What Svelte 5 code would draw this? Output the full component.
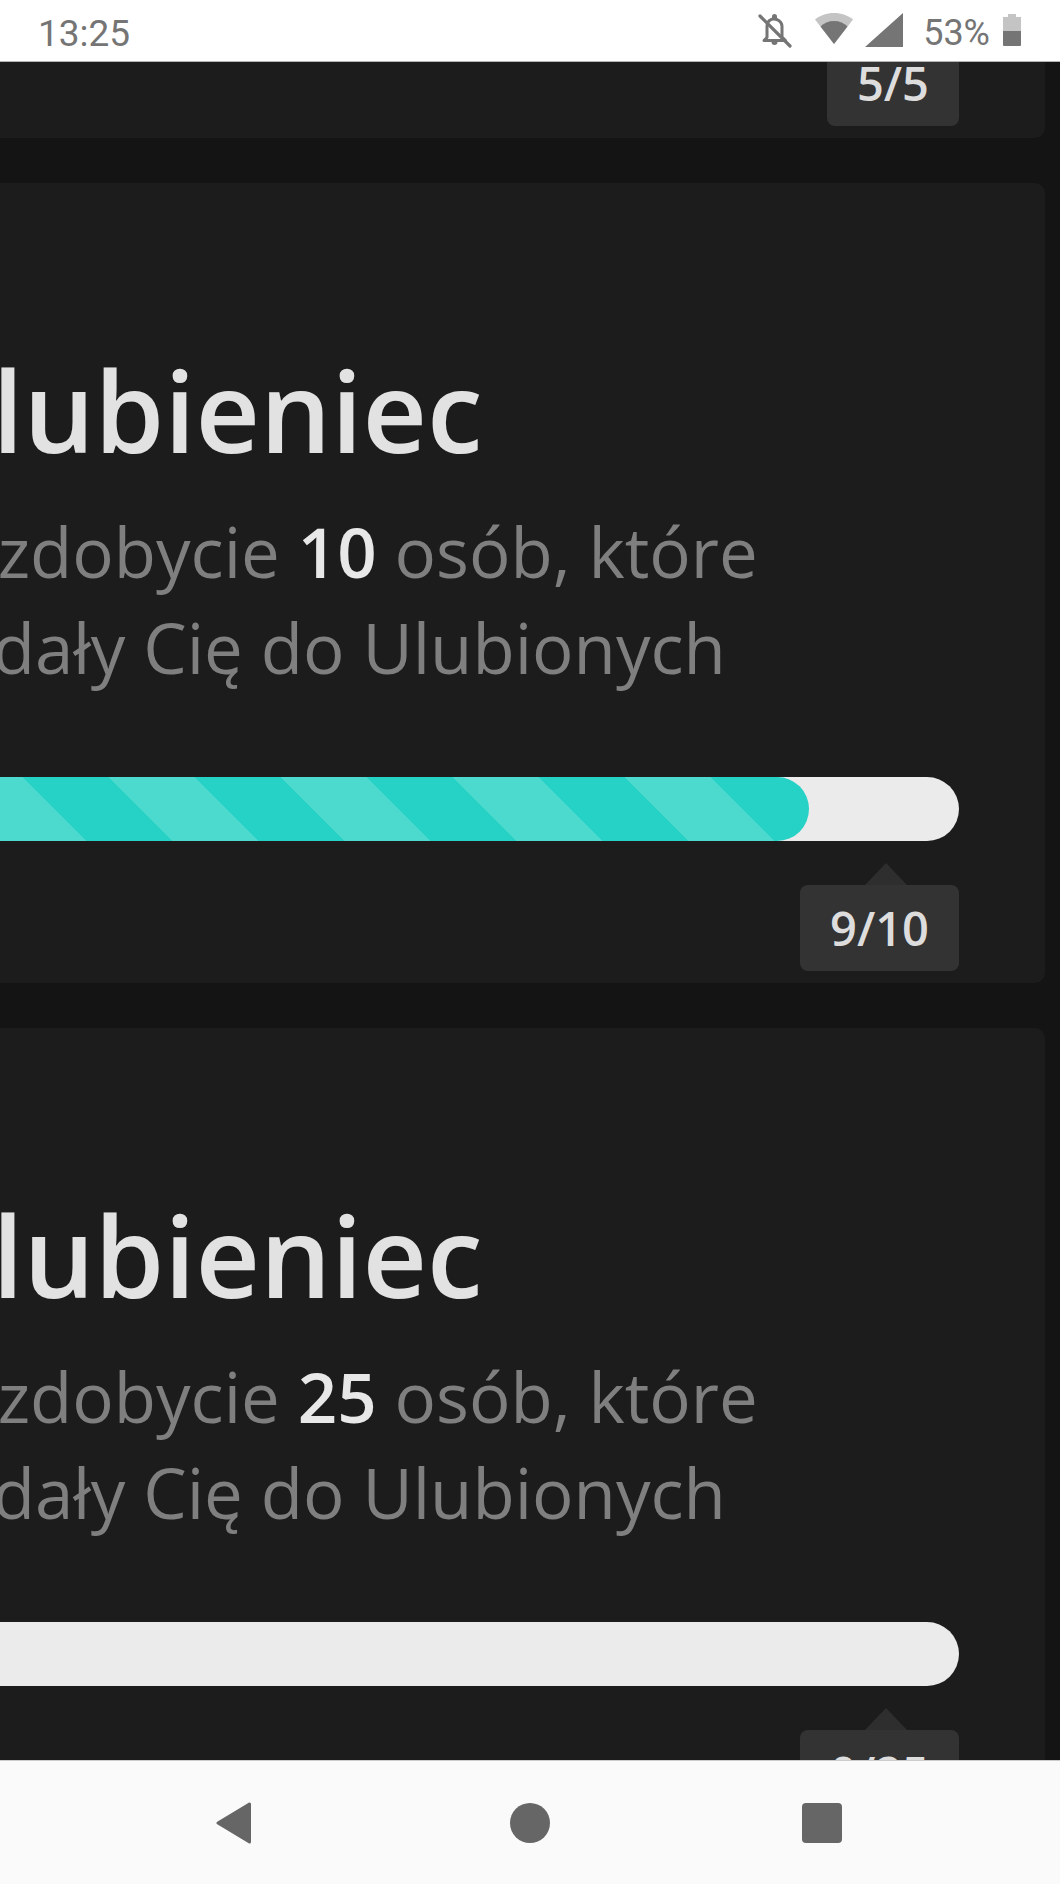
<script>
	const cards = [
		{ id: 1, title: 'Ulubieniec', goal: 5, value: 5 },
		{ id: 2, title: 'Ulubieniec', goal: 10, value: 9 },
		{ id: 3, title: 'Ulubieniec', goal: 25, value: 0 }
	];
</script>

<div class="phone">
	<header class="status-bar">
		<span class="time">13:25</span>
		<div class="status-icons">
			<svg class="bell" viewBox="0 0 34 34" width="34" height="34">
				<path fill="none" stroke="#757575" stroke-width="3" stroke-linejoin="round" d="M9 11.5C9 7.5 12.5 5 16 5s8 2.5 8 7.5v10.5l3.5 3.5H6l3-3z" />
				<path fill="#757575" d="M13.5 28h6a3 3 0 0 1-6 0zM14 2.500a2.500 2.500 0 0 1 5 0v3h-5z" />
				<path stroke="#757575" stroke-width="3.200" stroke-linecap="round" d="M2 2l30 30" />
			</svg>
			<svg class="wifi" viewBox="0 0 38 31" width="38" height="31">
				<path fill="#c4c4c4" d="M19 31L0 6.500C5 2.500 11.500 0 19 0s14 2.500 19 6.500z" />
				<path fill="#757575" d="M19 31L5.500 13.500C9 10 13.500 8 19 8s10 2 13.500 5.500z" />
			</svg>
			<svg class="signal" viewBox="0 0 38 34" width="38" height="34">
				<path fill="#757575" d="M0 34L38 0v34z" />
			</svg>
			<span class="battery-text">53%</span>
			<svg class="battery" viewBox="0 0 18 32" width="18" height="32">
				<path fill="#c4c4c4" d="M5 0h8v3h5v14H0V3h5z" />
				<path fill="#757575" d="M0 17h18v14a1 1 0 0 1-1 1H1a1 1 0 0 1-1-1z" />
			</svg>
		</div>
	</header>

	<main class="scroller">
		{#each cards as card (card.id)}
			<section class="card">
				<h2>{card.title}</h2>
				<p>Za zdobycie <strong>{card.goal}</strong> osób, które<br />dodały Cię do Ulubionych</p>
				<div class="track">
					<div class="fill" style="width: {(card.value / card.goal) * 100}%"></div>
				</div>
				<div class="count-row">
					<div class="count">{card.value}/{card.goal}</div>
				</div>
			</section>
		{/each}
	</main>

	<nav class="nav-bar">
		<svg class="back" viewBox="0 0 36 42" width="36" height="42">
			<path fill="#666" stroke="#666" stroke-width="3" stroke-linejoin="round" d="M33.500 2v38L2 21z" />
		</svg>
		<svg viewBox="0 0 40 40" width="40" height="40">
			<circle cx="20" cy="20" r="20" fill="#666" />
		</svg>
		<svg viewBox="0 0 40 40" width="40" height="40">
			<rect width="40" height="40" rx="4" fill="#666" />
		</svg>
	</nav>
</div>

<style>
	:global(body) {
		background: #141414;
	}

	.phone {
		display: flex;
		flex-direction: column;
		width: 1060px;
		height: 1884px;
		overflow: hidden;
		font-family: 'Open Sans', sans-serif;
	}

	/* Status bar */
	.status-bar {
		display: flex;
		flex: none;
		justify-content: space-between;
		align-items: flex-start;
		position: relative;
		z-index: 1;
		box-sizing: border-box;
		height: 62px;
		padding: 12px 39px 0 38px;
		background: #fff;
		border-bottom: 1px solid #b5b5b5;
		font-family: Roboto, sans-serif;
		color: #757575;
	}

	.time {
		font-size: 37px;
	}

	.status-icons {
		display: flex;
		align-items: flex-start;
	}

	.bell {
		margin: 2px 23px 0 0;
	}

	.wifi {
		margin: 1px 12px 0 0;
	}

	.signal {
		margin: 1px 20px 0 0;
	}

	.battery-text {
		margin-right: 13px;
		font-size: 36px;
	}

	.battery {
		margin-top: 2px;
	}

	/* Scrolled content */
	.scroller {
		flex: 1;
		min-height: 0;
		overflow: hidden;
	}

	.card {
		box-sizing: border-box;
		width: 1586px;
		height: 800px;
		margin: 0 0 45px -541px;
		padding: 152px 86px 0 455px;
		background: #1c1c1c;
		border-radius: 10px;
	}

	.card:first-child {
		margin-top: -724px;
	}

	h2 {
		margin: 0 0 0 -5px;
		font-size: 112px;
		font-weight: 600;
		line-height: 150px;
		color: #e2e2e2;
	}

	p {
		margin: 18px 0 0 -5px;
		font-size: 69px;
		line-height: 96px;
		text-indent: -7px;
		color: #7f7f7f;
	}

	strong {
		font-weight: 600;
		color: #e8e8e8;
	}

	.track {
		height: 64px;
		margin: 82px 0 0 -455px;
		overflow: hidden;
		background: #ebebeb;
		border-radius: 32px;
	}

	.fill {
		height: 100%;
		border-radius: 32px;
		background: repeating-linear-gradient(45deg, #26d1c6 -42.4px 18.4px, #4bdacd 18.4px 79.2px);
	}

	.count-row {
		display: flex;
		justify-content: flex-end;
		margin-top: 44px;
	}

	.count {
		position: relative;
		box-sizing: border-box;
		height: 86px;
		padding: 0 30px;
		background: #333;
		border-radius: 8px;
		font-size: 47px;
		font-weight: 600;
		line-height: 86px;
		color: #ddd;
	}

	.count::before {
		content: '';
		position: absolute;
		top: -22px;
		right: 52px;
		border-left: 21px solid transparent;
		border-right: 21px solid transparent;
		border-bottom: 22px solid #2e2e2e;
	}

	/* Android navigation */
	.nav-bar {
		display: flex;
		flex: none;
		align-items: center;
		justify-content: space-between;
		position: relative;
		box-sizing: border-box;
		height: 124px;
		padding: 0 218px 0 216px;
		background: #fafafa;
		border-top: 1px solid #ccc;
	}

	.back {
		margin-right: 6px;
	}
</style>
